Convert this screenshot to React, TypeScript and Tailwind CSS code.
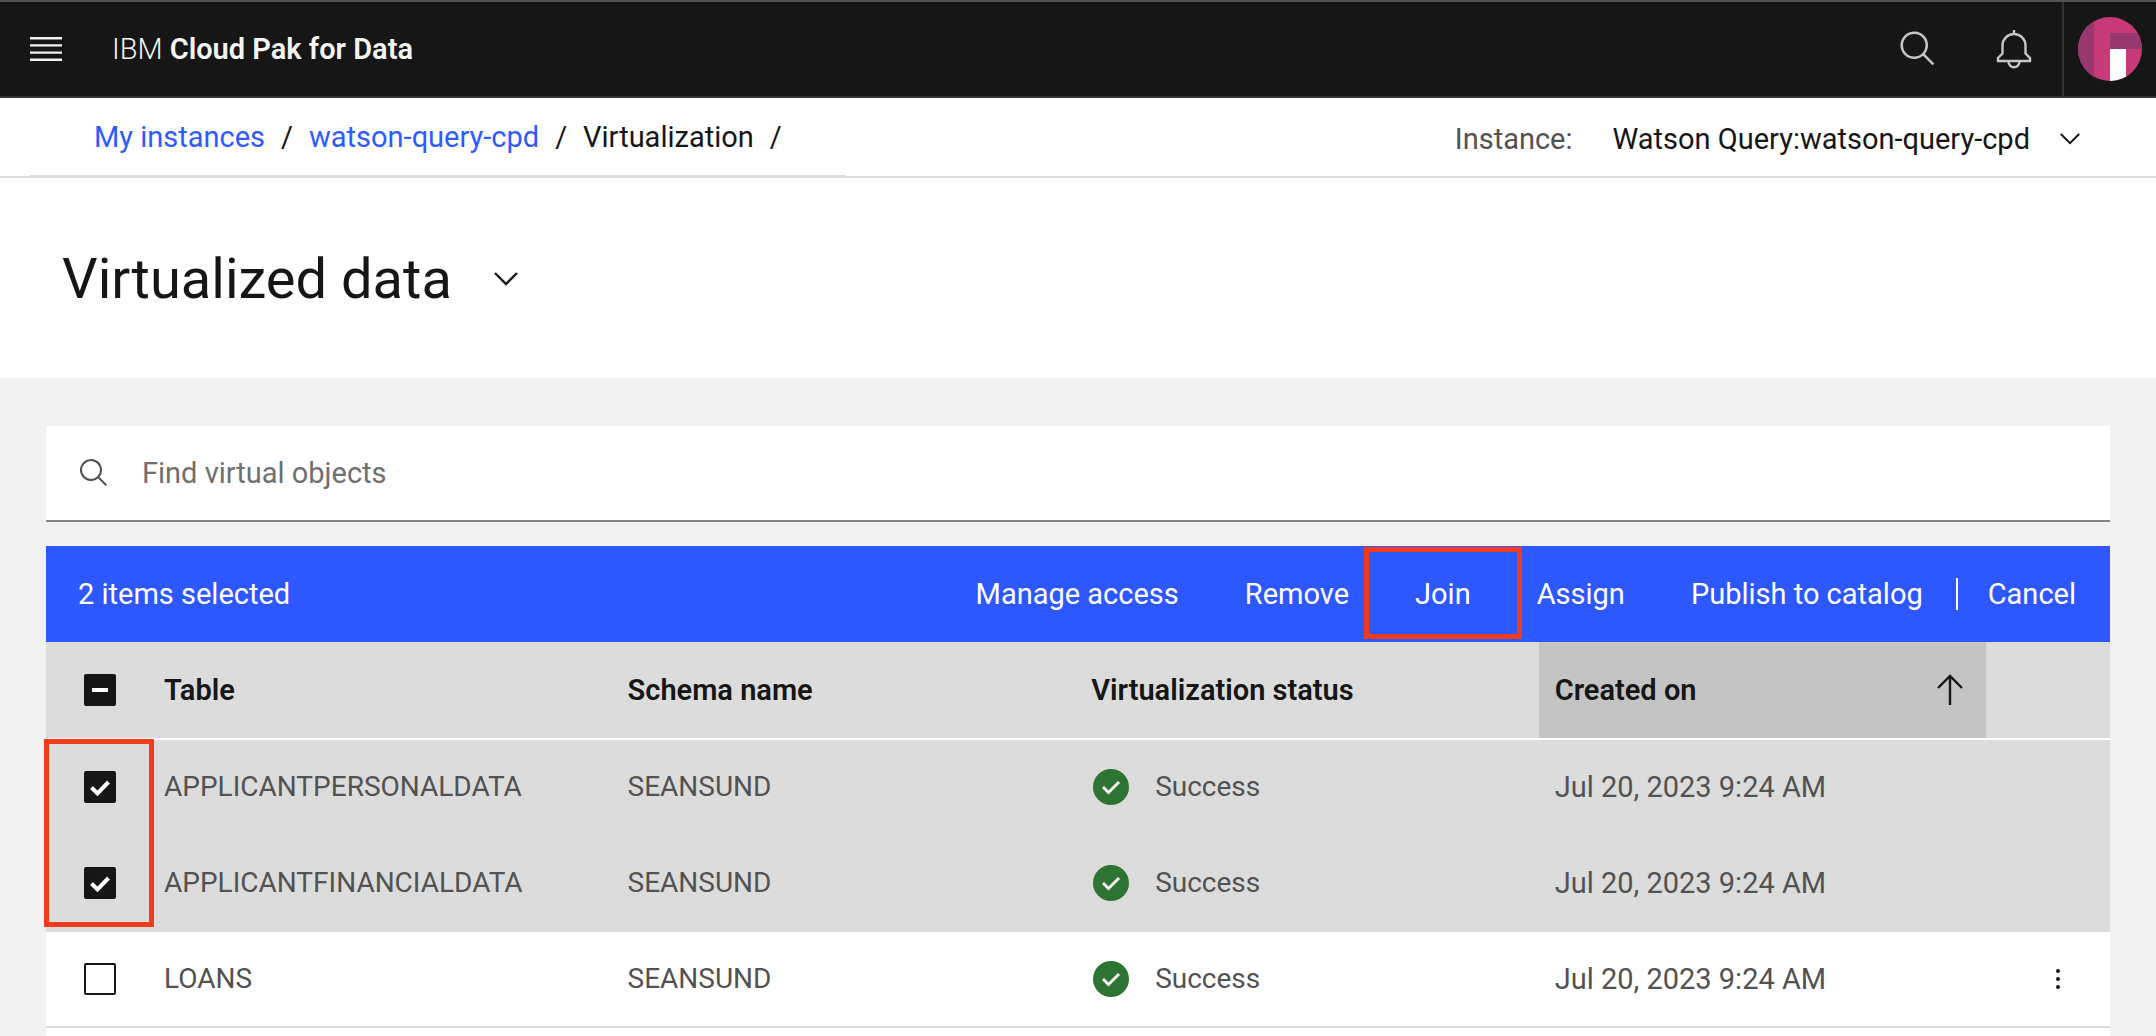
import type { ReactNode } from "react";

const rows = [
  { name: "APPLICANTPERSONALDATA", schema: "SEANSUND", status: "Success", created: "Jul 20, 2023 9:24 AM", selected: true },
  { name: "APPLICANTFINANCIALDATA", schema: "SEANSUND", status: "Success", created: "Jul 20, 2023 9:24 AM", selected: true },
  { name: "LOANS", schema: "SEANSUND", status: "Success", created: "Jul 20, 2023 9:24 AM", selected: false },
];

function SearchIcon({ className }: { className: string }) {
  return (
    <svg viewBox="0 0 32 32" fill="currentColor" className={className} aria-hidden="true">
      <path d="M29,27.5859l-7.5521-7.5521a11.0177,11.0177,0,1,0-1.4141,1.4141L27.5859,29ZM4,13a9,9,0,1,1,9,9A9.01,9.01,0,0,1,4,13Z" />
    </svg>
  );
}

function BellIcon() {
  return (
    <svg viewBox="0 0 40 42" fill="none" stroke="currentColor" strokeWidth="2.4" className="h-[42px] w-10" aria-hidden="true">
      <path d="M20 2v4M8.5 17.5a11.5 11.5 0 0 1 23 0v8l4.500 4.500v3H4v-3l4.500-4.500zM14.500 33.500a5.500 5.800 0 0 0 11 0" />
    </svg>
  );
}

function Chevron({ className }: { className: string }) {
  return (
    <svg viewBox="0 0 24 14" fill="none" stroke="currentColor" strokeWidth="2.4" className={className} aria-hidden="true">
      <path d="M1 1l11 11L23 1" />
    </svg>
  );
}

function Avatar() {
  return (
    <svg viewBox="0 0 64 64" className="size-16 rounded-full" aria-hidden="true">
      <rect width="64" height="64" fill="#c63a78" />
      <rect width="16" height="64" fill="#97386e" />
      <rect x="32" y="16" width="32" height="16" fill="#97386e" />
      <rect x="32" y="32" width="16" height="32" fill="#fff" />
    </svg>
  );
}

function SuccessIcon() {
  return (
    <svg viewBox="0 0 36 36" className="size-9" aria-hidden="true">
      <circle cx="18" cy="18" r="18" fill="#2f7332" />
      <path d="M10 18l5.500 5.500L26 13" fill="none" stroke="#fff" strokeWidth="2.800" />
    </svg>
  );
}

function Checkbox({ label, state }: { label: string; state: "on" | "off" | "mixed" }) {
  return (
    <span className="relative block size-8">
      <input
        type="checkbox"
        aria-label={label}
        defaultChecked={state !== "off"}
        className="peer block size-8 appearance-none rounded-[2px] border-2 border-[#161616] bg-white checked:bg-[#161616]"
      />
      <svg viewBox="0 0 32 32" className="pointer-events-none absolute inset-0 hidden size-8 peer-checked:block" fill="none" stroke="#fff" aria-hidden="true">
        {state === "mixed" ? <path d="M8 16h16" strokeWidth="4" /> : <path d="M7.500 16.500l6 6L24.500 11" strokeWidth="4" />}
      </svg>
    </span>
  );
}

function Action({ children, marked = false }: { children: ReactNode; marked?: boolean }) {
  return (
    <button type="button" className="relative h-full px-[33px]">
      {children}
      {marked && <span className="absolute -inset-x-[18px] top-px bottom-[3px] border-5 border-[#f03c1a]" />}
    </button>
  );
}

export default function App() {
  return (
    <div className="min-h-screen bg-[#f2f2f2] font-[Roboto,sans-serif] text-[29px] leading-9 text-[#161616]">
      <header className="flex h-[98px] items-center border-t-2 border-b-2 border-t-[#525252] border-b-[#333333] bg-[#161616] text-[#f4f4f4]">
        <button type="button" aria-label="Menu" className="ml-[30px]">
          <svg viewBox="0 0 32 24" className="h-6 w-8" fill="currentColor" aria-hidden="true">
            <path d="M0 0h32v2.400H0zM0 7.200h32v2.400H0zM0 14.400h32v2.400H0zM0 21.600h32V24H0z" />
          </svg>
        </button>
        <a href="#home" className="ml-[50px] font-light">
          IBM <span className="font-semibold">Cloud Pak for Data</span>
        </a>
        <div className="ml-auto flex h-full items-center text-[#c6c6c6]">
          <button type="button" aria-label="Search">
            <SearchIcon className="size-10" />
          </button>
          <button type="button" aria-label="Notifications" className="mr-[28px] ml-14">
            <BellIcon />
          </button>
          <button type="button" aria-label="Account" className="flex h-full items-center border-l-2 border-[#333333] px-[14px]">
            <Avatar />
          </button>
        </div>
      </header>

      <div className="flex h-20 items-center justify-between border-b-2 border-[#dcdcdc] bg-white pr-[76px] pl-[30px]">
        <nav aria-label="Breadcrumb" className="flex h-full w-[816px] items-center gap-4 border-b border-[#dcdcdc] pl-16">
          <a href="#instances" className="text-[#2d5bff]">My instances</a>
          <span>/</span>
          <a href="#query" className="text-[#2d5bff]">watson-query-cpd</a>
          <span>/</span>
          <span>Virtualization</span>
          <span>/</span>
        </nav>
        <div className="flex items-center pt-1">
          <span className="mr-10 text-[#525252]">Instance:</span>
          <button type="button" className="flex items-center gap-[30px]">
            Watson Query:watson-query-cpd
            <Chevron className="h-3 w-5" />
          </button>
        </div>
      </div>

      <div className="flex h-[200px] items-center bg-white pt-[2px] pl-[62px]">
        <h1>
          <button type="button" className="flex items-center gap-[42px] text-[56px] leading-16">
            Virtualized data
            <Chevron className="h-[14px] w-6" />
          </button>
        </h1>
      </div>

      <main className="px-[46px] pt-12">
        <label className="flex h-24 items-center gap-8 border-b-2 border-[#858585] bg-white pl-8">
          <SearchIcon className="size-8 text-[#525252]" />
          <input type="search" aria-label="Find virtual objects" placeholder="Find virtual objects" className="flex-1 bg-transparent outline-none placeholder:text-[#6f6f6f]" />
        </label>

        <div className="mt-6 flex h-24 items-center justify-between bg-[#2d57ff] pl-8 text-white">
          <span>2 items selected</span>
          <div className="flex h-full items-center">
            <Action>Manage access</Action>
            <Action>Remove</Action>
            <Action marked>Join</Action>
            <Action>Assign</Action>
            <Action>Publish to catalog</Action>
            <span className="h-8 w-[2px] bg-white" />
            <button type="button" className="h-full pr-[34px] pl-[30px]">Cancel</button>
          </div>
        </div>

        <table className="w-full table-fixed border-separate border-spacing-0 bg-white text-left">
          <colgroup>
            <col className="w-[102px]" />
            <col className="w-[22.46%]" />
            <col className="w-[22.46%]" />
            <col className="w-[22.46%]" />
            <col />
            <col className="w-[124px]" />
          </colgroup>
          <thead>
            <tr className="h-24 bg-[#dcdcdc]">
              <th className="pl-[38px]"><Checkbox label="Select all rows" state="mixed" /></th>
              <th className="pl-4 font-semibold">Table</th>
              <th className="pl-4 font-semibold">Schema name</th>
              <th className="pl-4 font-semibold">Virtualization status</th>
              <th className="bg-[#c4c4c4] px-4 font-semibold" aria-sort="ascending">
                <button type="button" className="flex w-full items-center justify-between pr-[6px]">
                  Created on
                  <svg viewBox="0 0 28 32" className="h-8 w-7" fill="none" stroke="currentColor" strokeWidth="2.400" aria-hidden="true">
                    <path d="M14 31V2.500M2 14L14 2l12 12" />
                  </svg>
                </button>
              </th>
              <th aria-label="Row actions" />
            </tr>
          </thead>
          <tbody className="text-[28px] text-[#525252]">
            <tr className="h-[2px]"><td colSpan={6} className="p-0" /></tr>
            {rows.map((row, i) => (
              <tr key={row.name} className={row.selected ? "h-24 bg-[#dcdcdc] *:border-b-2 *:border-[#dcdcdc]" : "h-24 *:border-b-2 *:border-[#dcdcdc]"}>
                <td className="relative pl-[38px]">
                  <Checkbox label={"Select " + row.name} state={row.selected ? "on" : "off"} />
                  {i === 0 && <span className="pointer-events-none absolute -top-px -left-[2px] z-10 h-[188px] w-[110px] border-5 border-[#f03c1a]" />}
                </td>
                <td className="pl-4">{row.name}</td>
                <td className="pl-4">{row.schema}</td>
                <td className="pl-[18px]">
                  <span className="flex items-center gap-[26px]"><SuccessIcon />{row.status}</span>
                </td>
                <td className="pl-4 text-[29px]">{row.created}</td>
                <td className="pl-[60px]">
                  {!row.selected && (
                    <button type="button" aria-label={"Actions for " + row.name} className="block text-[#161616]">
                      <svg viewBox="0 0 24 32" className="h-8 w-6" fill="currentColor" aria-hidden="true">
                        <circle cx="12" cy="8" r="2" /><circle cx="12" cy="16" r="2" /><circle cx="12" cy="24" r="2" />
                      </svg>
                    </button>
                  )}
                </td>
              </tr>
            ))}
            <tr className="h-2"><td colSpan={6} className="p-0" /></tr>
          </tbody>
        </table>
      </main>
    </div>
  );
}
